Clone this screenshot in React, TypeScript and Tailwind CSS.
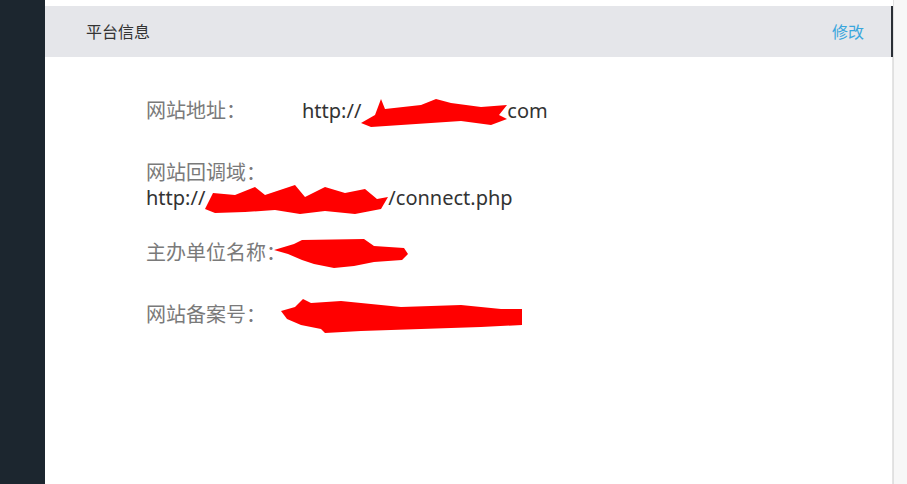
import React from "react";

const font = { fontFamily: '"Noto Sans", "Noto Sans CJK SC", sans-serif' };

function Scribble({ w, h, points, className = "" }: { w: number; h: number; points: string; className?: string }) {
  return (
    <svg width={w} height={h} viewBox={`0 0 ${w} ${h}`} className={`inline-block align-middle ${className}`}>
      <polygon points={points} fill="#ff0000" />
    </svg>
  );
}

export default function App() {
  return (
    <div className="flex h-[484px] w-[907px] overflow-hidden bg-white" style={font}>
      <div className="w-[45px] shrink-0 bg-[#1c262f]" />
      <div className="flex w-[848px] shrink-0 flex-col pt-[6px]">
        <div className="flex h-[51px] items-center justify-between border-r-2 border-[#2a2f36] bg-[#e5e6ea] pl-[41px] pr-[27px]">
          <span className="text-[16px] text-[#333]">平台信息</span>
          <span className="text-[16px] text-[#3aa6dd]">修改</span>
        </div>
        <div className="flex-1 border-r border-[#e4e4e4] pl-[101px] pt-[38px]">
          <div className="flex h-[32px] items-center">
            <span className="w-[156px] text-[20px] text-[#7a7a7a]">网站地址：</span>
            <span className="flex items-center text-[20px] text-[#333]">
              http://
              <Scribble
                w={146}
                h={32}
                points="0,28 14,20 20,4 24,14 60,10 75,4 90,8 120,12 146,10 138,20 146,24 130,30 100,26 70,28 40,30 10,32"
              />
              com
            </span>
          </div>
          <div className="mt-[33px] flex flex-col">
            <span className="h-[25px] text-[20px] leading-[25px] text-[#7a7a7a]">网站回调域：</span>
            <span className="flex h-[25px] items-center text-[20px] text-[#333]">
              http://
              <Scribble
                w={183}
                h={33}
                points="0,28 8,12 30,14 50,6 60,14 90,4 100,16 120,6 140,12 160,8 172,18 183,16 176,28 150,33 120,30 95,33 70,29 40,31 10,32"
              />
              /connect.php
            </span>
          </div>
          <div className="mt-[27px] flex h-[32px] items-center">
            <span className="text-[20px] text-[#7a7a7a]">主办单位名称：</span>
            <Scribble
              className="-ml-[12px]"
              w={134}
              h={30}
              points="0,12 20,6 28,2 90,1 100,8 130,10 134,16 128,22 100,24 80,28 60,30 40,26 28,22 14,16"
            />
          </div>
          <div className="mt-[28px] flex h-[36px] items-center">
            <span className="w-[135px] text-[20px] text-[#7a7a7a]">网站备案号：</span>
            <Scribble
              w={241}
              h={36}
              points="0,14 14,10 22,2 30,6 60,4 120,10 180,8 220,12 241,12 241,28 200,30 140,32 80,34 44,36 40,32 20,28 6,22"
            />
          </div>
        </div>
      </div>
      <div className="flex-1 border-l border-[#e0e0e0] bg-[#f7f7f7]" />
    </div>
  );
}
